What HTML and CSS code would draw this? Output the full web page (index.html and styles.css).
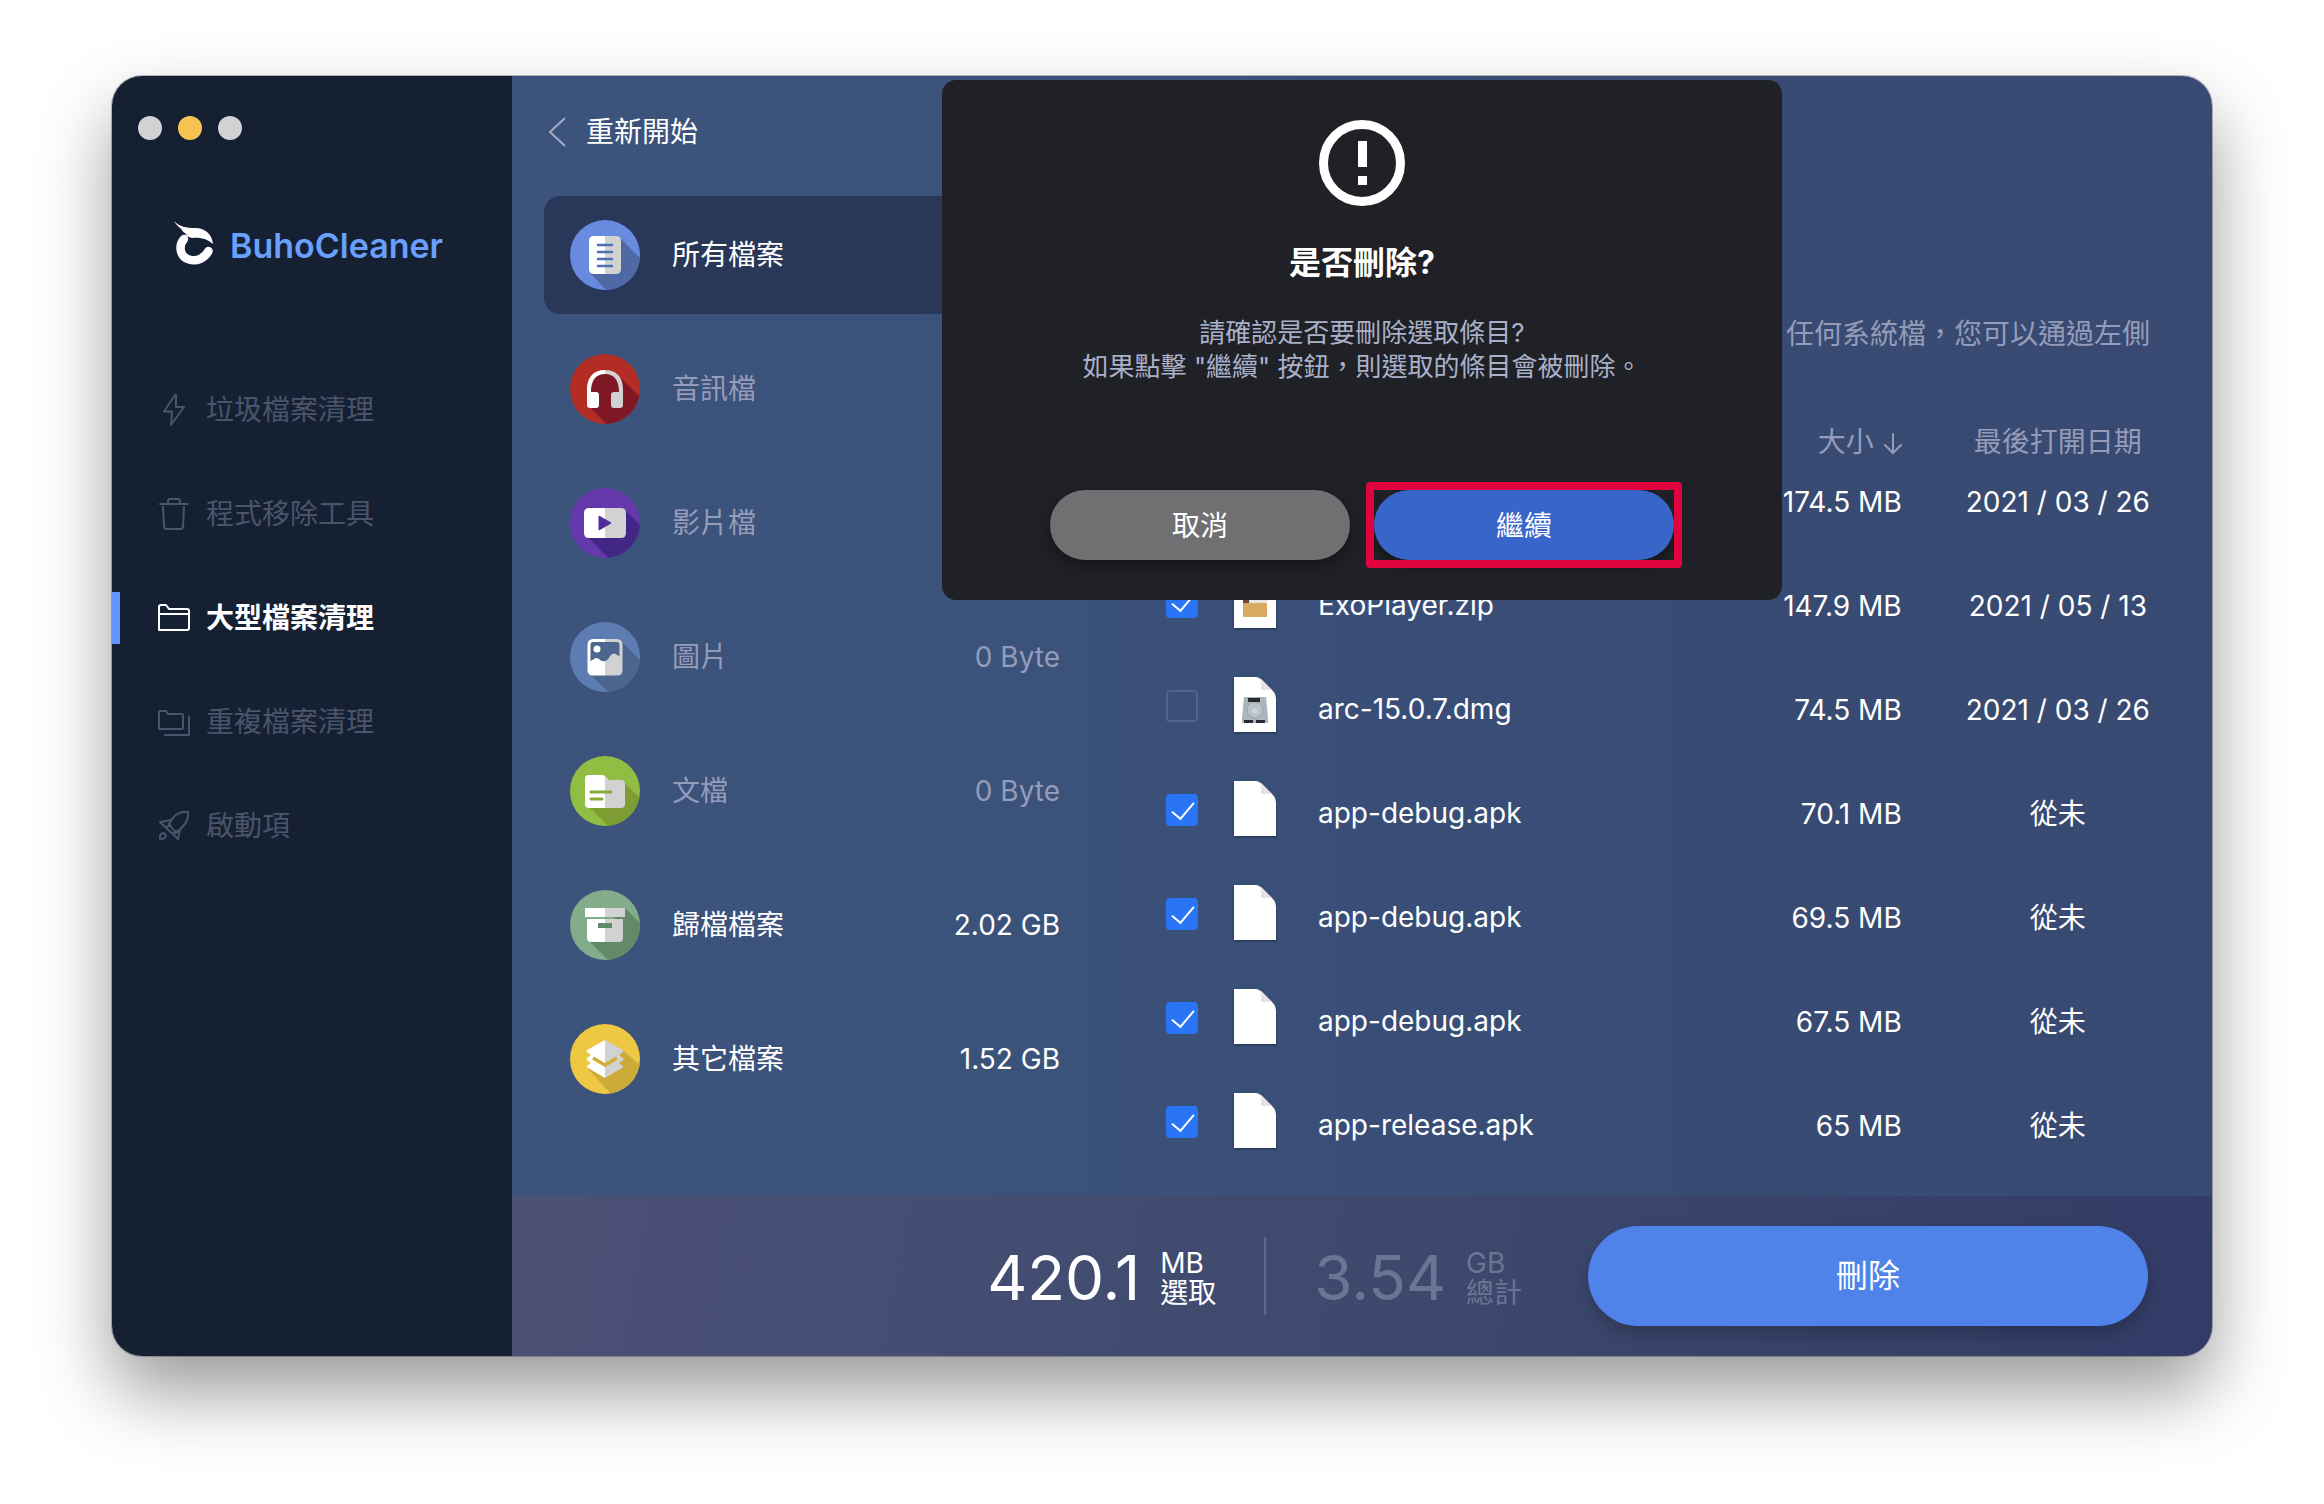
FILE: index.html
```html
<!DOCTYPE html>
<html lang="zh-Hant">
<head>
    <meta charset="UTF-8">
    <meta name="viewport" content="width=device-width, initial-scale=1.0">
    <title>BuhoCleaner</title>
    <link rel="stylesheet" href="styles.css">
</head>
<body>
    <div class="window">
        <aside class="sidebar">
            <div class="traffic-lights">
                <span class="light"></span>
                <span class="light light-yellow"></span>
                <span class="light"></span>
            </div>

            <div class="brand">
                <svg class="brand-logo" viewBox="0 0 40 44" fill="none">
                    <path d="M10 18C4 25 6 36 15 38.500C23 41 31 37 34.500 30" stroke="#fff" stroke-width="8.500" stroke-linecap="round"/>
                    <path d="M0 0C6 6 12 7 21 7C31 7 38 13 39 23C33 18 27 16 18 17C15 16 12 15 11 13L14 14C10 12 8 10 7 8L10 10C6 7 2 4 0 0Z" fill="#fff"/>
                </svg>
                <span class="brand-name">BuhoCleaner</span>
            </div>

            <nav class="nav">
                <a href="#" class="nav-item">
                    <svg class="nav-icon" viewBox="0 0 32 32"><path d="M17 1L6 17.500H14L13 31L26 13H18L18 1Z"/></svg>
                    垃圾檔案清理
                </a>
                <a href="#" class="nav-item">
                    <svg class="nav-icon" viewBox="0 0 32 32"><path d="M2 6H30M10 6V3Q10 1 12 1H20Q22 1 22 3V6M5 9L6 28Q6 31 9 31H22Q25 31 25 28L26 9"/></svg>
                    程式移除工具
                </a>
                <a href="#" class="nav-item active">
                    <svg class="nav-icon" viewBox="0 0 32 32"><path d="M1 28V5Q1 3 3 3H8L11 7H29Q31 7 31 9V26Q31 28 29 28H2M1 12H31"/></svg>
                    大型檔案清理
                </a>
                <a href="#" class="nav-item">
                    <svg class="nav-icon" viewBox="0 0 32 32"><path d="M1 23V6Q1 5 2 5H8L10 8H24Q25 8 25 9V22Q25 23 24 23H1M31 11V29H7"/></svg>
                    重複檔案清理
                </a>
                <a href="#" class="nav-item">
                    <svg class="nav-icon" viewBox="0 0 32 32"><path d="M11 14C16 4 22 1 30 2C31 10 28 14 18 23ZM13 10L2 12L20 29L22 19M8 18L12 14M15 24L18 21M2 29V26Q3 23 6 23Q9 25 7 28Q5 29 2 29Z"/></svg>
                    啟動項
                </a>
            </nav>
        </aside>

        <main class="main">
            <div class="content">
                <section class="categories">
                    <button type="button" class="back-button">
                        <svg class="back-icon" viewBox="0 0 18 30"><path d="M17 1L2 15L17 29"/></svg>
                        重新開始
                    </button>

                    <ul class="category-list">
                        <li class="category selected">
                            <svg class="category-icon" viewBox="0 0 70 70">
                                <rect width="70" height="70" fill="#688be0"/>
                                <path d="M50 18L72 40V72H38L20 53Z" fill="#4e69a4"/>
                                <path d="M35 16H24Q19 16 19 21V49Q19 54 24 54H35Z" fill="#fff"/>
                                <path d="M35 16H46Q51 16 51 21V49Q51 54 46 54H35Z" fill="#d2d2d2"/>
                                <path d="M28 25H42M28 32H42M28 39H42M28 46H42" stroke="#5070b4" stroke-width="2.500" stroke-linecap="round"/>
                            </svg>
                            <span class="category-name">所有檔案</span>
                        </li>
                        <li class="category empty">
                            <svg class="category-icon" viewBox="0 0 70 70">
                                <rect width="70" height="70" fill="#b42d25"/>
                                <path d="M19 28Q24 19 35 19Q44 18 52 25L72 45V72H38L20 53Z" fill="#801724"/>
                                <path d="M17 35C17 23 24 16 35 16V20C26 20 21 26 21 38H26Q29 38 29 41V51Q29 54 26 54H20Q17 54 17 51Z" fill="#fff"/>
                                <path d="M53 35C53 23 46 16 35 16V20C44 20 49 26 49 38H44Q41 38 41 41V51Q41 54 44 54H50Q53 54 53 51Z" fill="#d2d2d2"/>
                            </svg>
                            <span class="category-name">音訊檔</span>
                        </li>
                        <li class="category empty">
                            <svg class="category-icon" viewBox="0 0 70 70">
                                <rect width="70" height="70" fill="#6538ac"/>
                                <path d="M54 21L72 39V72H40L17 48Z" fill="#432787"/>
                                <path d="M35 20H19Q14 20 14 25V45Q14 50 19 50H35Z" fill="#fff"/>
                                <path d="M35 20H51Q56 20 56 25V45Q56 50 51 50H35Z" fill="#d2d2d2"/>
                                <path d="M29 28L41 35L29 42Z" fill="#502c9b" stroke="#502c9b" stroke-width="1" stroke-linejoin="round"/>
                            </svg>
                            <span class="category-name">影片檔</span>
                        </li>
                        <li class="category empty">
                            <svg class="category-icon" viewBox="0 0 70 70">
                                <rect width="70" height="70" fill="#5d7db2"/>
                                <path d="M51 19L72 40V72H40L19 51V19Z" fill="#4c668e"/>
                                <path d="M35 18.500H23Q19 18.500 19 23V48Q19 52 23 52H35" fill="none" stroke="#fff" stroke-width="3"/>
                                <path d="M35 18.500H47Q51 18.500 51 23V48Q51 52 47 52H35" fill="none" stroke="#d2d2d2" stroke-width="3"/>
                                <circle cx="27" cy="27" r="3.500" fill="#fff"/>
                                <path d="M19 40L24 37Q26 35 29 37Q32 40 35 39V53H21Q19 52 19 49Z" fill="#fff"/>
                                <path d="M35 39Q37 39 41 33Q44 30 47 33L51 35V49Q51 52 48 53H35Z" fill="#d2d2d2"/>
                            </svg>
                            <span class="category-name">圖片</span>
                            <span class="category-size">0 Byte</span>
                        </li>
                        <li class="category empty">
                            <svg class="category-icon" viewBox="0 0 70 70">
                                <rect width="70" height="70" fill="#90bd42"/>
                                <path d="M54 27L72 44V72H40L18 50Z" fill="#7e9c31"/>
                                <path d="M35 20Q34 19 32 19H19Q15 19 15 23V48Q15 52 19 52H35Z" fill="#fff"/>
                                <path d="M35 20L39 24H51Q55 24 55 28V48Q55 52 51 52H35Z" fill="#d2d2d2"/>
                                <path d="M21 36H41M21 43H32" stroke="#86a938" stroke-width="3" stroke-linecap="round"/>
                            </svg>
                            <span class="category-name">文檔</span>
                            <span class="category-size">0 Byte</span>
                        </li>
                        <li class="category">
                            <svg class="category-icon" viewBox="0 0 70 70">
                                <rect width="70" height="70" fill="#83ad8a"/>
                                <path d="M55 18L72 35V72H40L19 51Z" fill="#628968"/>
                                <path d="M15 18H35V27H15ZM17 29H35V52H21Q17 52 17 48Z" fill="#fff"/>
                                <path d="M35 18H55V27H35ZM35 29H53V48Q53 52 49 52H35Z" fill="#d2d2d2"/>
                                <rect x="28" y="33" width="14" height="5" fill="#628968"/>
                            </svg>
                            <span class="category-name">歸檔檔案</span>
                            <span class="category-size">2.02 GB</span>
                        </li>
                        <li class="category">
                            <svg class="category-icon" viewBox="0 0 70 70">
                                <rect width="70" height="70" fill="#eec843"/>
                                <path d="M53 26L72 43V72H43L18 45Z" fill="#ccab38"/>
                                <path d="M35 16L17 26Q16 27 17 28L21 31L17 34Q16 35 17 36L21 39L17 42Q16 43 18 44L35 54Z" fill="#fff"/>
                                <path d="M35 16L53 26Q54 27 53 28L49 31L53 34Q54 35 53 36L49 39L53 42Q54 43 52 44L35 54Z" fill="#d2d2d2"/>
                                <path d="M23 34L35 41L47 34" fill="none" stroke="#d2ae38" stroke-width="3.500"/>
                            </svg>
                            <span class="category-name">其它檔案</span>
                            <span class="category-size">1.52 GB</span>
                        </li>
                    </ul>
                </section>

                <section class="files">
                    <p class="files-hint">任何系統檔，您可以通過左側</p>
                    <table class="file-table">
                        <thead>
                            <tr>
                                <th class="col-check"></th>
                                <th class="col-icon"></th>
                                <th></th>
                                <th class="col-size">大小<svg class="sort-icon" viewBox="0 0 18 22"><path d="M9 1V20M1 12L9 20L17 12"/></svg></th>
                                <th class="col-date">最後打開日期</th>
                            </tr>
                        </thead>
                        <tbody>
                            <tr>
                                <td></td>
                                <td></td>
                                <td></td>
                                <td class="col-size">174.5 MB</td>
                                <td class="col-date">2021 / 03 / 26</td>
                            </tr>
                            <tr>
                                <td class="col-check"><input type="checkbox" class="check" id="file-1" checked></td>
                                <td class="col-icon">
                                    <svg class="file-icon" viewBox="0 0 42 56">
                                        <path d="M0 0H22Q25 0 28 3L39 14Q42 17 42 21V55H0Z" fill="#fff"/>
                                        <path d="M9 20H20L22 22H33V44H9Z" fill="#e8e4e0"/>
                                        <path d="M9 26H15V31H9Z" fill="#6b4a2c"/>
                                        <rect x="9" y="30" width="24" height="14" rx="1" fill="#d9aa62"/>
                                    </svg>
                                </td>
                                <td class="col-name"><label for="file-1">ExoPlayer.zip</label></td>
                                <td class="col-size">147.9 MB</td>
                                <td class="col-date">2021 / 05 / 13</td>
                            </tr>
                            <tr>
                                <td class="col-check"><input type="checkbox" class="check" id="file-2"></td>
                                <td class="col-icon">
                                    <svg class="file-icon" viewBox="0 0 42 56">
                                        <path d="M0 0H22Q25 0 28 3L39 14Q42 17 42 21V55H0Z" fill="#fff"/>
                                        <path d="M27 2V13H38Z" fill="#e3e3e5"/>
                                        <path d="M10 20H32L34 41V46H8V41Z" fill="#abb5ba"/>
                                        <circle cx="21" cy="33" r="8" fill="#b8c2c7" stroke="#98a3a9"/>
                                        <circle cx="21" cy="34" r="3" fill="#cbd3d6"/>
                                        <path d="M14 21H26V25H14ZM10 43H19V46H10ZM22 43H31V46H22Z" fill="#252b30"/>
                                    </svg>
                                </td>
                                <td class="col-name"><label for="file-2">arc-15.0.7.dmg</label></td>
                                <td class="col-size">74.5 MB</td>
                                <td class="col-date">2021 / 03 / 26</td>
                            </tr>
                            <tr>
                                <td class="col-check"><input type="checkbox" class="check" id="file-3" checked></td>
                                <td class="col-icon">
                                    <svg class="file-icon" viewBox="0 0 42 56">
                                        <path d="M0 0H22Q25 0 28 3L39 14Q42 17 42 21V55H0Z" fill="#fff"/>
                                        <path d="M27 2V13H38Z" fill="#e3e3e5"/>
                                    </svg>
                                </td>
                                <td class="col-name"><label for="file-3">app-debug.apk</label></td>
                                <td class="col-size">70.1 MB</td>
                                <td class="col-date">從未</td>
                            </tr>
                            <tr>
                                <td class="col-check"><input type="checkbox" class="check" id="file-4" checked></td>
                                <td class="col-icon">
                                    <svg class="file-icon" viewBox="0 0 42 56">
                                        <path d="M0 0H22Q25 0 28 3L39 14Q42 17 42 21V55H0Z" fill="#fff"/>
                                        <path d="M27 2V13H38Z" fill="#e3e3e5"/>
                                    </svg>
                                </td>
                                <td class="col-name"><label for="file-4">app-debug.apk</label></td>
                                <td class="col-size">69.5 MB</td>
                                <td class="col-date">從未</td>
                            </tr>
                            <tr>
                                <td class="col-check"><input type="checkbox" class="check" id="file-5" checked></td>
                                <td class="col-icon">
                                    <svg class="file-icon" viewBox="0 0 42 56">
                                        <path d="M0 0H22Q25 0 28 3L39 14Q42 17 42 21V55H0Z" fill="#fff"/>
                                        <path d="M27 2V13H38Z" fill="#e3e3e5"/>
                                    </svg>
                                </td>
                                <td class="col-name"><label for="file-5">app-debug.apk</label></td>
                                <td class="col-size">67.5 MB</td>
                                <td class="col-date">從未</td>
                            </tr>
                            <tr>
                                <td class="col-check"><input type="checkbox" class="check" id="file-6" checked></td>
                                <td class="col-icon">
                                    <svg class="file-icon" viewBox="0 0 42 56">
                                        <path d="M0 0H22Q25 0 28 3L39 14Q42 17 42 21V55H0Z" fill="#fff"/>
                                        <path d="M27 2V13H38Z" fill="#e3e3e5"/>
                                    </svg>
                                </td>
                                <td class="col-name"><label for="file-6">app-release.apk</label></td>
                                <td class="col-size">65 MB</td>
                                <td class="col-date">從未</td>
                            </tr>
                        </tbody>
                    </table>
                </section>
            </div>

            <footer class="footer">
                <div class="stat stat-selected">
                    <span class="stat-value">420.1</span>
                    <span class="stat-unit">MB<br>選取</span>
                </div>
                <div class="stat stat-total">
                    <span class="stat-value">3.54</span>
                    <span class="stat-unit">GB<br>總計</span>
                </div>
                <button type="button" class="delete-button">刪除</button>
            </footer>

            <div class="dialog" role="alertdialog" aria-labelledby="dialog-title">
                <svg class="dialog-icon" viewBox="0 0 86 86">
                    <circle cx="43" cy="43" r="38.500" fill="none" stroke="#fff" stroke-width="9"/>
                    <path d="M39 21H48V47H39ZM39 56H48V65H39Z" fill="#fff"/>
                </svg>
                <h2 class="dialog-title" id="dialog-title">是否刪除?</h2>
                <p class="dialog-text">請確認是否要刪除選取條目?<br>如果點擊 "繼續" 按鈕，則選取的條目會被刪除。</p>
                <div class="dialog-buttons">
                    <button type="button" class="dialog-button">取消</button>
                    <button type="button" class="dialog-button primary">繼續</button>
                </div>
            </div>
        </main>
    </div>
</body>
</html>
```
FILE: styles.css
```css
:root {
    --sidebar-bg: #162033;
    --sidebar-text: #4a546a;
    --brand-color: #68a0fb;
    --accent-color: #4f83ea;
    --check-color: #2a74f6;
    --muted-color: #959cba;
    --highlight-color: #e0033d;
}

* {
    margin: 0;
    padding: 0;
    box-sizing: border-box;
}

body {
    font-family: Inter, 'Noto Sans CJK TC', sans-serif;
    font-size: 28px;
    line-height: 36px;
    background: #fff;
    color: #fff;
    min-height: 100vh;
    display: flex;
    padding: 76px 112px 148px;
}

button {
    font: inherit;
    color: inherit;
    border: none;
    cursor: pointer;
}

.window {
    flex: 1;
    display: grid;
    grid-template-columns: 400px minmax(0, 1fr);
    border-radius: 30px;
    overflow: hidden;
    box-shadow: 0 0 0 1px rgba(0, 0, 0, 0.25), 0 36px 72px rgba(0, 0, 0, 0.4);
}

/* Sidebar */
.sidebar {
    background: var(--sidebar-bg);
    padding-top: 40px;
}

.traffic-lights {
    display: flex;
    gap: 16px;
    padding-left: 26px;
}

.light {
    width: 24px;
    height: 24px;
    border-radius: 50%;
    background: #d2d2d2;
}

.light-yellow {
    background: #f7c351;
}

.brand {
    display: flex;
    align-items: center;
    gap: 16px;
    margin: 78px 0 116px;
    padding-left: 62px;
}

.brand-logo {
    width: 40px;
    height: 44px;
}

.brand-name {
    font-size: 34px;
    line-height: 44px;
    font-weight: 600;
    color: var(--brand-color);
    padding-top: 6px;
}

.nav {
    display: flex;
    flex-direction: column;
    gap: 52px;
}

.nav-item {
    display: flex;
    align-items: center;
    gap: 16px;
    height: 52px;
    padding-left: 38px;
    border-left: 8px solid transparent;
    color: var(--sidebar-text);
    text-decoration: none;
}

.nav-item.active {
    border-color: #6495ff;
    color: #fff;
    font-weight: 700;
}

.nav-icon {
    width: 32px;
    height: 32px;
    fill: none;
    stroke: currentColor;
    stroke-width: 2;
    stroke-linejoin: round;
    stroke-linecap: round;
}

/* Main area */
.main {
    position: relative;
    display: flex;
    flex-direction: column;
    background: linear-gradient(90deg, #3c537c 0%, #3b527b 30%, #384b73 70%, #384a71 100%);
}

.content {
    flex: 1;
    display: grid;
    grid-template-columns: minmax(0, 542px) minmax(0, 1fr);
    gap: 80px;
    padding: 0 62px 0 32px;
}

.back-button {
    display: flex;
    align-items: center;
    gap: 20px;
    height: 36px;
    margin: 38px 0 46px 4px;
    background: none;
}

.back-icon {
    width: 18px;
    height: 30px;
    fill: none;
    stroke: #a3aac4;
    stroke-width: 2;
}

.category-list {
    list-style: none;
    display: flex;
    flex-direction: column;
    gap: 16px;
}

.category {
    display: flex;
    align-items: center;
    height: 118px;
    padding: 0 26px;
    border-radius: 16px;
}

.category.selected {
    background: #293858;
}

.category.empty {
    color: var(--muted-color);
}

.category-icon {
    width: 70px;
    height: 70px;
    border-radius: 50%;
    margin-right: 32px;
}

.category-size {
    margin-left: auto;
}

.files-hint {
    margin: 240px 0 68px;
    text-align: right;
    color: var(--muted-color);
}

.file-table {
    width: 100%;
    border-collapse: collapse;
}

.file-table th {
    height: 30px;
    line-height: 16px;
    vertical-align: bottom;
    font-weight: 400;
    color: var(--muted-color);
}

.file-table td {
    height: 104px;
    vertical-align: middle;
}

.file-table .col-check {
    width: 68px;
    padding-bottom: 8px;
}

.file-table .col-icon {
    width: 84px;
    padding-bottom: 10px;
}

.file-table .col-name {
    padding-bottom: 2px;
}

.file-table .col-size {
    width: 220px;
    padding-right: 64px;
    text-align: right;
    white-space: nowrap;
}

.file-table .col-date {
    width: 178px;
    text-align: center;
    white-space: nowrap;
}

.sort-icon {
    width: 18px;
    height: 22px;
    margin: -6px 0 -6px 10px;
    vertical-align: middle;
    fill: none;
    stroke: currentColor;
    stroke-width: 2;
    stroke-linecap: round;
}

.check {
    appearance: none;
    display: block;
    width: 32px;
    height: 32px;
    border: 2px solid #54658c;
    border-radius: 4px;
}

.check:checked {
    background: var(--check-color);
    border-color: var(--check-color);
}

.check:checked::before {
    content: '';
    display: block;
    width: 10px;
    height: 20px;
    margin: 1px 0 0 9px;
    border: solid #fff;
    border-width: 0 2px 2px 0;
    transform: rotate(40deg);
}

.file-icon {
    display: block;
    width: 42px;
    height: 56px;
    filter: drop-shadow(0 1px 1px rgba(0, 0, 0, 0.4));
}

/* Footer */
.footer {
    display: flex;
    align-items: center;
    justify-content: flex-end;
    height: 160px;
    padding-right: 64px;
    background: linear-gradient(100deg, #4c5176 0%, #3e496e 50%, #323c66 100%);
}

.stat {
    display: flex;
    align-items: center;
    gap: 20px;
    height: 78px;
}

.stat-value {
    font-size: 62px;
    line-height: 74px;
    padding-top: 4px;
}

.stat-unit {
    line-height: 30px;
    padding-top: 4px;
}

.stat-selected {
    padding-right: 48px;
    border-right: 2px solid #5f6889;
}

.stat-total {
    padding: 0 66px 0 48px;
    color: #6b7494;
}

.delete-button {
    width: 560px;
    height: 100px;
    border-radius: 50px;
    font-size: 32px;
    background: var(--accent-color);
    box-shadow: 0 8px 16px rgba(0, 0, 0, 0.2);
}

/* Confirm dialog */
.dialog {
    position: absolute;
    top: 4px;
    left: 0;
    right: 0;
    width: 840px;
    height: 520px;
    margin: 0 auto;
    padding-top: 40px;
    border-radius: 14px;
    background: #202126;
    text-align: center;
}

.dialog-icon {
    display: block;
    width: 86px;
    height: 86px;
    margin: 0 auto 36px;
}

.dialog-title {
    font-size: 32px;
    line-height: 42px;
    font-weight: 700;
    margin-bottom: 32px;
}

.dialog-text {
    font-size: 26px;
    line-height: 34px;
    color: #a9b0c8;
    margin-bottom: 106px;
}

.dialog-buttons {
    display: flex;
    justify-content: center;
    gap: 24px;
}

.dialog-button {
    width: 300px;
    height: 70px;
    padding-top: 2px;
    border-radius: 35px;
    background: #707072;
    box-shadow: 0 6px 14px rgba(0, 0, 0, 0.35);
}

.dialog-button.primary {
    position: relative;
    background: #3765c8;
}

.dialog-button.primary::after {
    content: '';
    position: absolute;
    inset: -8px;
    border: 8px solid var(--highlight-color);
    border-radius: 4px;
}
```
